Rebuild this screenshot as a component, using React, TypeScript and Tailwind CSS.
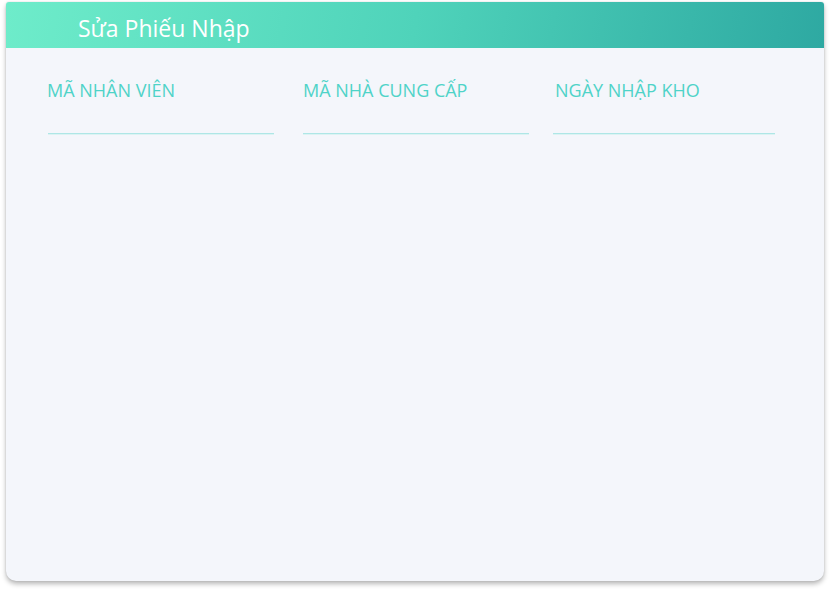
import React from "react";

export default function App() {
  const font = { fontFamily: '"Open Sans", "Noto Sans", sans-serif' };
  return (
    <div className="w-[830px] h-[592px] bg-white" style={font}>
      <div className="ml-[6px] pt-[2px]">
        <div className="w-[818px] h-[579px] bg-[#f4f6fb] rounded-b-[10px] rounded-t-[3px] shadow-[0_3px_5px_rgba(0,0,0,0.28),0_0_2px_rgba(0,0,0,0.12)] overflow-hidden flex flex-col">
          <div className="h-[46px] bg-[linear-gradient(100deg,#6eecca_0%,#4fd3ba_50%,#2ea9a2_100%)] flex items-center pl-[72px] pt-[7px]">
            <span className="text-white text-[23px] leading-none">Sửa Phiếu Nhập</span>
          </div>
          <div className="flex pt-[30px]">
            <div className="ml-[42px] w-[226px] flex flex-col">
              <span className="text-[#4fd3c8] text-[18px] leading-[24px] -ml-[1px]">MÃ NHÂN VIÊN</span>
              <div className="mt-[31px] h-px bg-[#aee6e6] shadow-[0_1px_0_#dcf3f3]" />
            </div>
            <div className="ml-[29px] w-[226px] flex flex-col">
              <span className="text-[#4fd3c8] text-[18px] leading-[24px]">MÃ NHÀ CUNG CẤP</span>
              <div className="mt-[31px] h-px bg-[#aee6e6] shadow-[0_1px_0_#dcf3f3]" />
            </div>
            <div className="ml-[24px] w-[222px] flex flex-col">
              <span className="text-[#4fd3c8] text-[18px] leading-[24px] ml-[2px]">NGÀY NHẬP KHO</span>
              <div className="mt-[31px] h-px bg-[#aee6e6] shadow-[0_1px_0_#dcf3f3]" />
            </div>
          </div>
        </div>
      </div>
    </div>
  );
}
